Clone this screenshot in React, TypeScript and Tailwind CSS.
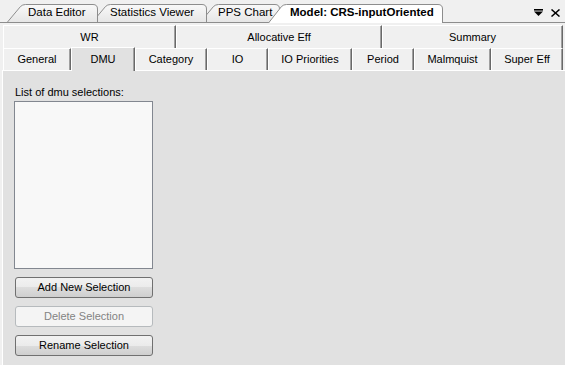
import React from "react";

function TabShape({ w, active }: { w: number; active?: boolean }) {
  const h = active ? 19 : 18;
  const d = `M0.5 ${h} L13.5 2.5 Q15.5 0.5 18.5 0.5 L${w - 5} 0.5 Q${w - 0.5} 0.5 ${w - 0.5} 5 L${w - 0.5} ${h}`;
  return (
    <svg className="absolute inset-0" width={w} height={h} viewBox={`0 0 ${w} ${h}`}>
      <defs>
        <linearGradient id="tabg" x1="0" y1="0" x2="0" y2="1">
          <stop offset="0" stopColor="#f9f9f9" />
          <stop offset="1" stopColor="#e6e6e6" />
        </linearGradient>
      </defs>
      <path d={d + " Z"} fill={active ? "#ffffff" : "url(#tabg)"} stroke="none" />
      <path d={d} fill="none" stroke="#8d8d8d" strokeWidth="1" />
    </svg>
  );
}

function Btn({ label, disabled }: { label: string; disabled?: boolean }) {
  return (
    <div
      className={
        disabled
          ? "ml-[12px] flex h-[21px] w-[138px] items-center justify-center rounded-[3px] border border-[#b6babd] bg-[#f4f4f4] text-[11px] text-[#838383]"
          : "ml-[12px] flex h-[21px] w-[138px] items-center justify-center rounded-[3px] border border-[#707070] bg-[linear-gradient(#f2f2f2_0%,#ebebeb_50%,#dddddd_50%,#cfcfcf_100%)] text-[11px] text-black"
      }
    >
      {label}
    </div>
  );
}

const tabCls =
  "flex items-center justify-center border-t border-l border-white border-r border-r-[#696969] shadow-[inset_-1px_0_#a0a0a0] bg-[#f0f0f0] text-[11px] text-black";

export default function App() {
  return (
    <div className="flex h-[365px] w-[565px] flex-col overflow-hidden bg-[#f0f0f0] font-['Liberation_Sans',Arial,sans-serif] text-black">
      {/* document tab strip */}
      <div className="flex h-[23px] shrink-0 items-end border-b border-[#8d8d8d] pt-[4px]">
        <div className="relative z-30 ml-[7px] h-[18px] w-[91px] shrink-0">
          <TabShape w={91} />
          <div className="relative pl-[21px] pt-[1px] text-[11.5px] leading-[14px]">Data Editor</div>
        </div>
        <div className="relative z-20 -ml-[6px] h-[18px] w-[115px] shrink-0">
          <TabShape w={115} />
          <div className="relative pl-[18px] pt-[1px] text-[11.5px] leading-[14px]">Statistics Viewer</div>
        </div>
        <div className="relative z-10 -ml-[7px] h-[18px] w-[80px] shrink-0">
          <TabShape w={80} />
          <div className="relative pl-[18px] pt-[1px] text-[11.5px] leading-[14px]">PPS Chart</div>
        </div>
        <div className="relative z-40 -mb-[1px] -ml-[12px] h-[19px] w-[175px] shrink-0">
          <TabShape w={175} active />
          <div className="relative pl-[22px] pt-[1px] text-[11.5px] font-bold leading-[14px]">Model: CRS-inputOriented</div>
        </div>
        <div className="ml-auto flex items-center gap-[8px] self-center pb-[1px] pr-[5px]">
          <svg width="9" height="7" viewBox="0 0 9 7">
            <rect x="0" y="0" width="9" height="1.6" fill="#000" />
            <polygon points="0,2.6 9,2.6 4.5,7" fill="#000" />
          </svg>
          <svg width="9" height="8" viewBox="0 0 9 8">
            <path d="M0.5 0.5 L8.5 7.5 M8.5 0.5 L0.5 7.5" stroke="#000" strokeWidth="1.5" />
          </svg>
        </div>
      </div>

      {/* multi-row tabs */}
      <div className="shrink-0 pt-[2px] pl-[3px] pr-[2px]">
        <div className="flex h-[23px]">
          <div className={tabCls + " w-[173px]"}>WR</div>
          <div className={tabCls + " w-[206px]"}>Allocative Eff</div>
          <div className={tabCls + " flex-1"}>Summary</div>
        </div>
        <div className="flex h-[22px]">
          <div className={tabCls + " w-[68px]"}>General</div>
          <div className="relative z-10 -mb-[1px] -mt-[1px] flex h-[24px] w-[64px] items-center justify-center border-l border-t border-r border-white border-r-[#696969] bg-[#e1e1e1] text-[11px] text-black shadow-[inset_-1px_0_#a0a0a0]">
            DMU
          </div>
          <div className={tabCls + " w-[72px]"}>Category</div>
          <div className={tabCls + " w-[61px]"}>IO</div>
          <div className={tabCls + " w-[84px]"}>IO Priorities</div>
          <div className={tabCls + " w-[62px]"}>Period</div>
          <div className={tabCls + " w-[77px]"}>Malmquist</div>
          <div className={tabCls + " flex-1"}>Super Eff</div>
        </div>
      </div>

      {/* panel */}
      <div className="ml-[2px] flex flex-1 flex-col border-l border-t border-white bg-[#e1e1e1]">
        <div className="pl-[12px] pt-[15px] text-[11px] leading-[13px]">List of dmu selections:</div>
        <div className="ml-[11px] mt-[2px] h-[168px] w-[139px] border border-[#828790] bg-[#f8f8f8]" />
        <div className="mt-[8px] flex flex-col gap-[8px]">
          <Btn label="Add New Selection" />
          <Btn label="Delete Selection" disabled />
          <Btn label="Rename Selection" />
        </div>
      </div>
    </div>
  );
}
